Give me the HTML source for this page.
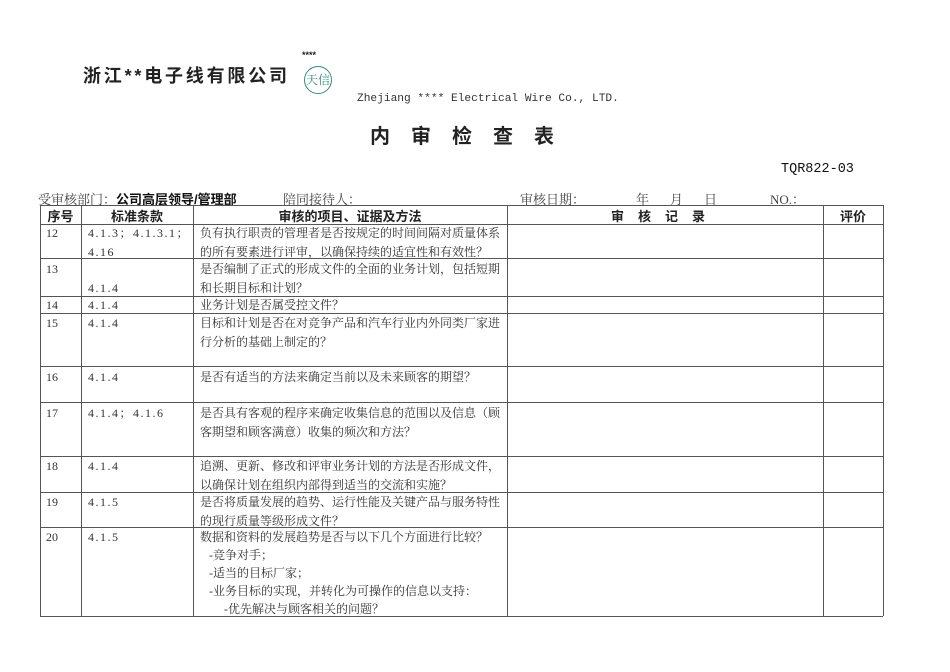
<!DOCTYPE html>
<html><head><meta charset="utf-8"><style>
body{margin:0;width:950px;height:672px;background:#fff;position:relative;overflow:hidden;font-family:"Liberation Serif","Noto Serif CJK SC",serif;color:#222}
.a{position:absolute;white-space:nowrap}
.h{position:absolute;height:0;border-top:1px solid #555}
.v{position:absolute;width:0;border-left:1px solid #555}
.t{position:absolute;font-size:12px;line-height:19px;color:#333;white-space:nowrap}
.n{letter-spacing:1.5px}
.b{font-family:"Liberation Sans","Noto Sans CJK SC",sans-serif;font-weight:bold}
</style></head><body>
<div class="a b" style="left:83px;top:62px;font-size:18px;letter-spacing:2.8px">浙江**电子线有限公司</div>
<div class="a b" style="left:302px;top:50px;font-size:9px">****</div>
<div class="a" style="left:304px;top:66px;width:26px;height:26px;border:1.5px solid #3a8a80;border-radius:50%;color:#3a8a80;font-size:12px;text-align:center;line-height:26px;font-family:'Noto Serif CJK SC',serif">天信</div>
<div class="a" style="left:357px;top:93px;font-size:11.2px;font-family:'Liberation Mono',monospace;color:#333">Zhejiang **** Electrical Wire Co., LTD.</div>
<div class="a b" style="left:370px;top:120px;font-size:20px;letter-spacing:21px">内审检查表</div>
<div class="a" style="left:781px;top:162px;font-size:13.5px;font-family:'Liberation Mono',monospace;color:#111">TQR822-03</div>
<div class="a" style="left:38px;top:189px;font-size:13px;color:#444">受审核部门：<span class="b" style="color:#111">公司高层领导/管理部</span></div>
<div class="a" style="left:283px;top:189px;font-size:13px;color:#444">陪同接待人：</div>
<div class="a" style="left:520px;top:189px;font-size:13px;color:#444">审核日期：</div>
<div class="a" style="left:636px;top:189px;font-size:13px;color:#444">年</div>
<div class="a" style="left:670px;top:189px;font-size:13px;color:#444">月</div>
<div class="a" style="left:704px;top:189px;font-size:13px;color:#444">日</div>
<div class="a" style="left:770px;top:189px;font-size:13px;color:#444">NO.：</div>

<div class="h" style="left:40px;width:843px;top:205px"></div>
<div class="h" style="left:40px;width:843px;top:224px"></div>
<div class="h" style="left:40px;width:843px;top:258px"></div>
<div class="h" style="left:40px;width:843px;top:296px"></div>
<div class="h" style="left:40px;width:843px;top:313px"></div>
<div class="h" style="left:40px;width:843px;top:366px"></div>
<div class="h" style="left:40px;width:843px;top:402px"></div>
<div class="h" style="left:40px;width:843px;top:456px"></div>
<div class="h" style="left:40px;width:843px;top:492px"></div>
<div class="h" style="left:40px;width:843px;top:527px"></div>
<div class="h" style="left:40px;width:843px;top:616px"></div>
<div class="v" style="left:40px;top:205px;height:411px"></div>
<div class="v" style="left:81px;top:205px;height:411px"></div>
<div class="v" style="left:193px;top:205px;height:411px"></div>
<div class="v" style="left:507px;top:205px;height:411px"></div>
<div class="v" style="left:823px;top:205px;height:411px"></div>
<div class="v" style="left:883px;top:205px;height:411px"></div>

<div class="a b" style="left:40px;width:41px;top:206px;text-align:center;font-size:13px">序号</div>
<div class="a b" style="left:81px;width:112px;top:206px;text-align:center;font-size:13px">标准条款</div>
<div class="a b" style="left:193px;width:314px;top:206px;text-align:center;font-size:13px">审核的项目、证据及方法</div>
<div class="a b" style="left:507px;width:316px;top:206px;text-align:center;font-size:13px;letter-spacing:14px">审核记录</div>
<div class="a b" style="left:823px;width:60px;top:206px;text-align:center;font-size:13px">评价</div>

<div class="t" style="left:46px;top:224px">12</div>
<div class="t n" style="left:88px;top:224px">4.1.3；4.1.3.1；<br>4.16</div>
<div class="t" style="left:200px;top:224px">负有执行职责的管理者是否按规定的时间间隔对质量体系<br>的所有要素进行评审，以确保持续的适宜性和有效性？</div>
<div class="t" style="left:46px;top:260px">13</div>
<div class="t n" style="left:88px;top:279px">4.1.4</div>
<div class="t" style="left:200px;top:260px">是否编制了正式的形成文件的全面的业务计划，包括短期<br>和长期目标和计划？</div>
<div class="t" style="left:46px;top:296px">14</div>
<div class="t n" style="left:88px;top:296px">4.1.4</div>
<div class="t" style="left:200px;top:296px">业务计划是否属受控文件？</div>
<div class="t" style="left:46px;top:314px">15</div>
<div class="t n" style="left:88px;top:314px">4.1.4</div>
<div class="t" style="left:200px;top:314px">目标和计划是否在对竞争产品和汽车行业内外同类厂家进<br>行分析的基础上制定的？</div>
<div class="t" style="left:46px;top:368px">16</div>
<div class="t n" style="left:88px;top:368px">4.1.4</div>
<div class="t" style="left:200px;top:368px">是否有适当的方法来确定当前以及未来顾客的期望？</div>
<div class="t" style="left:46px;top:404px">17</div>
<div class="t n" style="left:88px;top:404px">4.1.4；4.1.6</div>
<div class="t" style="left:200px;top:404px">是否具有客观的程序来确定收集信息的范围以及信息（顾<br>客期望和顾客满意）收集的频次和方法？</div>
<div class="t" style="left:46px;top:457px">18</div>
<div class="t n" style="left:88px;top:457px">4.1.4</div>
<div class="t" style="left:200px;top:457px">追溯、更新、修改和评审业务计划的方法是否形成文件，<br>以确保计划在组织内部得到适当的交流和实施？</div>
<div class="t" style="left:46px;top:493px">19</div>
<div class="t n" style="left:88px;top:493px">4.1.5</div>
<div class="t" style="left:200px;top:493px">是否将质量发展的趋势、运行性能及关键产品与服务特性<br>的现行质量等级形成文件？</div>
<div class="t" style="left:46px;top:528px">20</div>
<div class="t n" style="left:88px;top:528px">4.1.5</div>
<div class="t" style="left:200px;top:528px;line-height:18px">数据和资料的发展趋势是否与以下几个方面进行比较？<br>&nbsp;&nbsp;&nbsp;-竞争对手；<br>&nbsp;&nbsp;&nbsp;-适当的目标厂家；<br>&nbsp;&nbsp;&nbsp;-业务目标的实现，并转化为可操作的信息以支持：<br>&nbsp;&nbsp;&nbsp;&nbsp;&nbsp;&nbsp;&nbsp;&nbsp;-优先解决与顾客相关的问题？</div>
</body></html>
